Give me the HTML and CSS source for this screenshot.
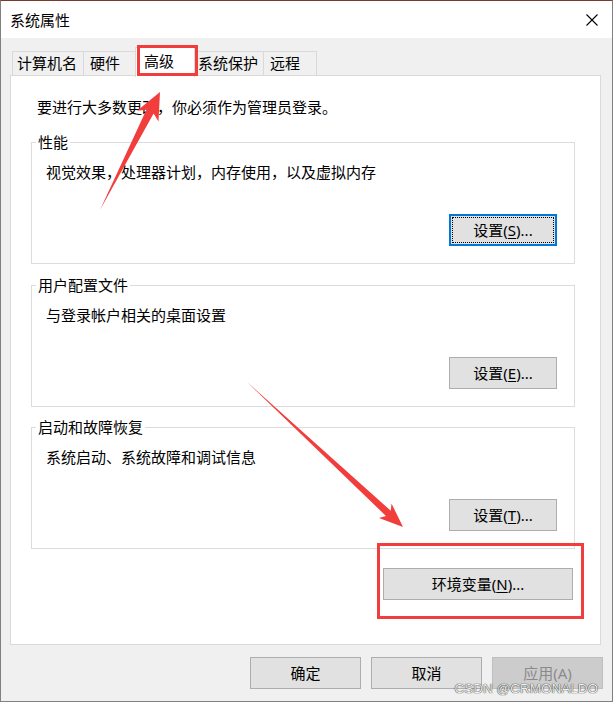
FILE: index.html
```html
<!DOCTYPE html>
<html lang="zh-CN">
<head>
<meta charset="utf-8">
<title>系统属性</title>
<link rel="stylesheet" href="styles.css">
</head>
<body>
<div class="window">
  <div class="titlebar">
    <span class="title">系统属性</span>
    <svg class="close" width="12" height="12" viewBox="0 0 12 12"><path d="M0.5 0.5 L11.5 11.5 M11.5 0.5 L0.5 11.5" stroke="#000" stroke-width="1.1" fill="none"/></svg>
  </div>
  <div class="client">
    <div class="tabs">
      <div class="tab t1">计算机名</div>
      <div class="tab t2">硬件</div>
      <div class="tab t3 selected">高级</div>
      <div class="tab t4">系统保护</div>
      <div class="tab t5">远程</div>
    </div>
    <div class="panel">
      <p class="note">要进行大多数更改，你必须作为管理员登录。</p>
      <fieldset class="group g1">
        <legend>性能</legend>
        <p class="desc">视觉效果，处理器计划，内存使用，以及虚拟内存</p>
        <div class="btnrow"><button class="btn focused"><span class="ring">设置(<u>S</u>)...</span></button></div>
      </fieldset>
      <fieldset class="group g2">
        <legend>用户配置文件</legend>
        <p class="desc">与登录帐户相关的桌面设置</p>
        <div class="btnrow"><button class="btn">设置(<u>E</u>)...</button></div>
      </fieldset>
      <fieldset class="group g3">
        <legend>启动和故障恢复</legend>
        <p class="desc">系统启动、系统故障和调试信息</p>
        <div class="btnrow"><button class="btn">设置(<u>T</u>)...</button></div>
      </fieldset>
      <div class="envrow"><button class="btn env">环境变量(<u>N</u>)...</button></div>
    </div>
    <div class="footer">
      <button class="btn foot">确定</button>
      <button class="btn foot">取消</button>
      <button class="btn foot disabled">应用(<u>A</u>)</button>
    </div>
  </div>
</div>
<svg class="annot" width="613" height="702" viewBox="0 0 613 702">
  <rect x="138.5" y="46.5" width="58" height="28" fill="none" stroke="#f23d3d" stroke-width="3"/>
  <rect x="378.5" y="544.5" width="204" height="73" fill="none" stroke="#f23d3d" stroke-width="3"/>
  <polygon points="100,210 153.6,113.4 158.5,121.5 160,92 137.1,110.7 146.4,109.8" fill="#f23d3d"/>
  <polygon points="247,382 390.8,510.8 391.5,503.5 403,527 379,518 386,516" fill="#f23d3d"/>
</svg>
<div class="watermark">CSDN @CRMONALDO</div>
</body>
</html>
```
FILE: styles.css
```css
html, body {
  margin: 0;
  padding: 0;
}
body {
  position: relative;
  width: 613px;
  height: 702px;
  overflow: hidden;
  font-family: "Noto Sans", "Noto Sans CJK SC", sans-serif;
  font-size: 15px;
  color: #000;
  background: #f0f0f0;
}
.window {
  width: 613px;
  height: 702px;
  box-sizing: border-box;
  border: 1px solid #808080;
  border-top-color: #7a3b2d;
  background: #f0f0f0;
  display: flex;
  flex-direction: column;
}
.titlebar {
  height: 37px;
  flex: none;
  background: #fff;
  display: flex;
  align-items: center;
  justify-content: space-between;
  padding: 0 14px 0 9px;
}
.title {
  line-height: 20px;
}
.close {
  display: block;
}
.client {
  flex: 1;
  padding: 13px 11px 0 9px;
  display: flex;
  flex-direction: column;
}
.tabs {
  display: flex;
  height: 24px;
  margin-left: 2px;
  align-items: flex-start;
}
.tab {
  box-sizing: border-box;
  height: 24px;
  border: 1px solid #d9d9d9;
  border-bottom: none;
  border-right: none;
  background: #f0f0f0;
  line-height: 22px;
  white-space: nowrap;
}
.t1 { width: 71px; padding-left: 4px; }
.t2 { width: 54px; padding-left: 6px; }
.t3 { width: 60px; padding-left: 8px; }
.t4 { width: 70px; padding-left: 4px; }
.t5 { width: 54px; padding-left: 6px; border-right: 1px solid #d9d9d9; }
.tab.selected {
  position: relative;
  z-index: 2;
  height: 30px;
  margin: -4px -2px 0 -2px;
  background: #fff;
  border-right: 1px solid #d9d9d9;
  line-height: 26px;
}
.panel {
  position: relative;
  z-index: 1;
  height: 570px;
  box-sizing: border-box;
  border: 1px solid #d9d9d9;
  background: #fff;
  padding: 21px 25px 0 20px;
  display: flex;
  flex-direction: column;
}
.note {
  margin: 0 0 0 6px;
  line-height: 20px;
}
.group {
  margin: 15px 0 0 0;
  padding: 10px 17px 17px 14px;
  border: 1px solid #dcdcdc;
  min-inline-size: 0;
}
.g2 { margin-top: 11px; }
.g3 { margin-top: 10px; }
.group legend {
  margin-left: -10px;
  padding: 0 2px;
  line-height: 20px;
}
.desc {
  margin: 0;
  line-height: 20px;
}
.btnrow {
  margin-top: 32px;
  display: flex;
  justify-content: flex-end;
}
.btn {
  box-sizing: border-box;
  height: 32px;
  width: 108px;
  border: 1px solid #adadad;
  background: #e1e1e1;
  font-family: "Noto Sans", "Noto Sans CJK SC", sans-serif;
  font-size: 15px;
  color: #000;
  padding: 0;
  line-height: 20px;
}
.btn u {
  text-underline-offset: 2px;
}
.btn.focused {
  border: 2px solid #0078d7;
  padding: 1px;
  display: flex;
}
.ring {
  flex: 1;
  border: 1px dotted #000;
  display: flex;
  align-items: center;
  justify-content: center;
}
.envrow {
  margin-top: 19px;
  display: flex;
  justify-content: flex-end;
  padding-right: 2px;
}
.btn.env {
  width: 190px;
}
.footer {
  margin-top: 12px;
  margin-right: -2px;
  display: flex;
  justify-content: flex-end;
  gap: 10px;
}
.btn.foot {
  width: 111px;
}
.btn.disabled {
  background: #cccccc;
  border-color: #bfbfbf;
  color: #8a8a8a;
}
.btn.disabled u {
  text-decoration: none;
}
.annot {
  position: absolute;
  left: 0;
  top: 0;
  pointer-events: none;
  z-index: 5;
}
.watermark {
  position: absolute;
  right: 15px;
  bottom: 6px;
  z-index: 6;
  font-family: "Liberation Sans", Arial, sans-serif;
  font-size: 13.5px;
  color: rgba(255, 255, 255, 0.95);
  text-shadow: 0 0 1px rgba(0, 0, 0, 0.75), 0 0 1px rgba(0, 0, 0, 0.75);
}
```
